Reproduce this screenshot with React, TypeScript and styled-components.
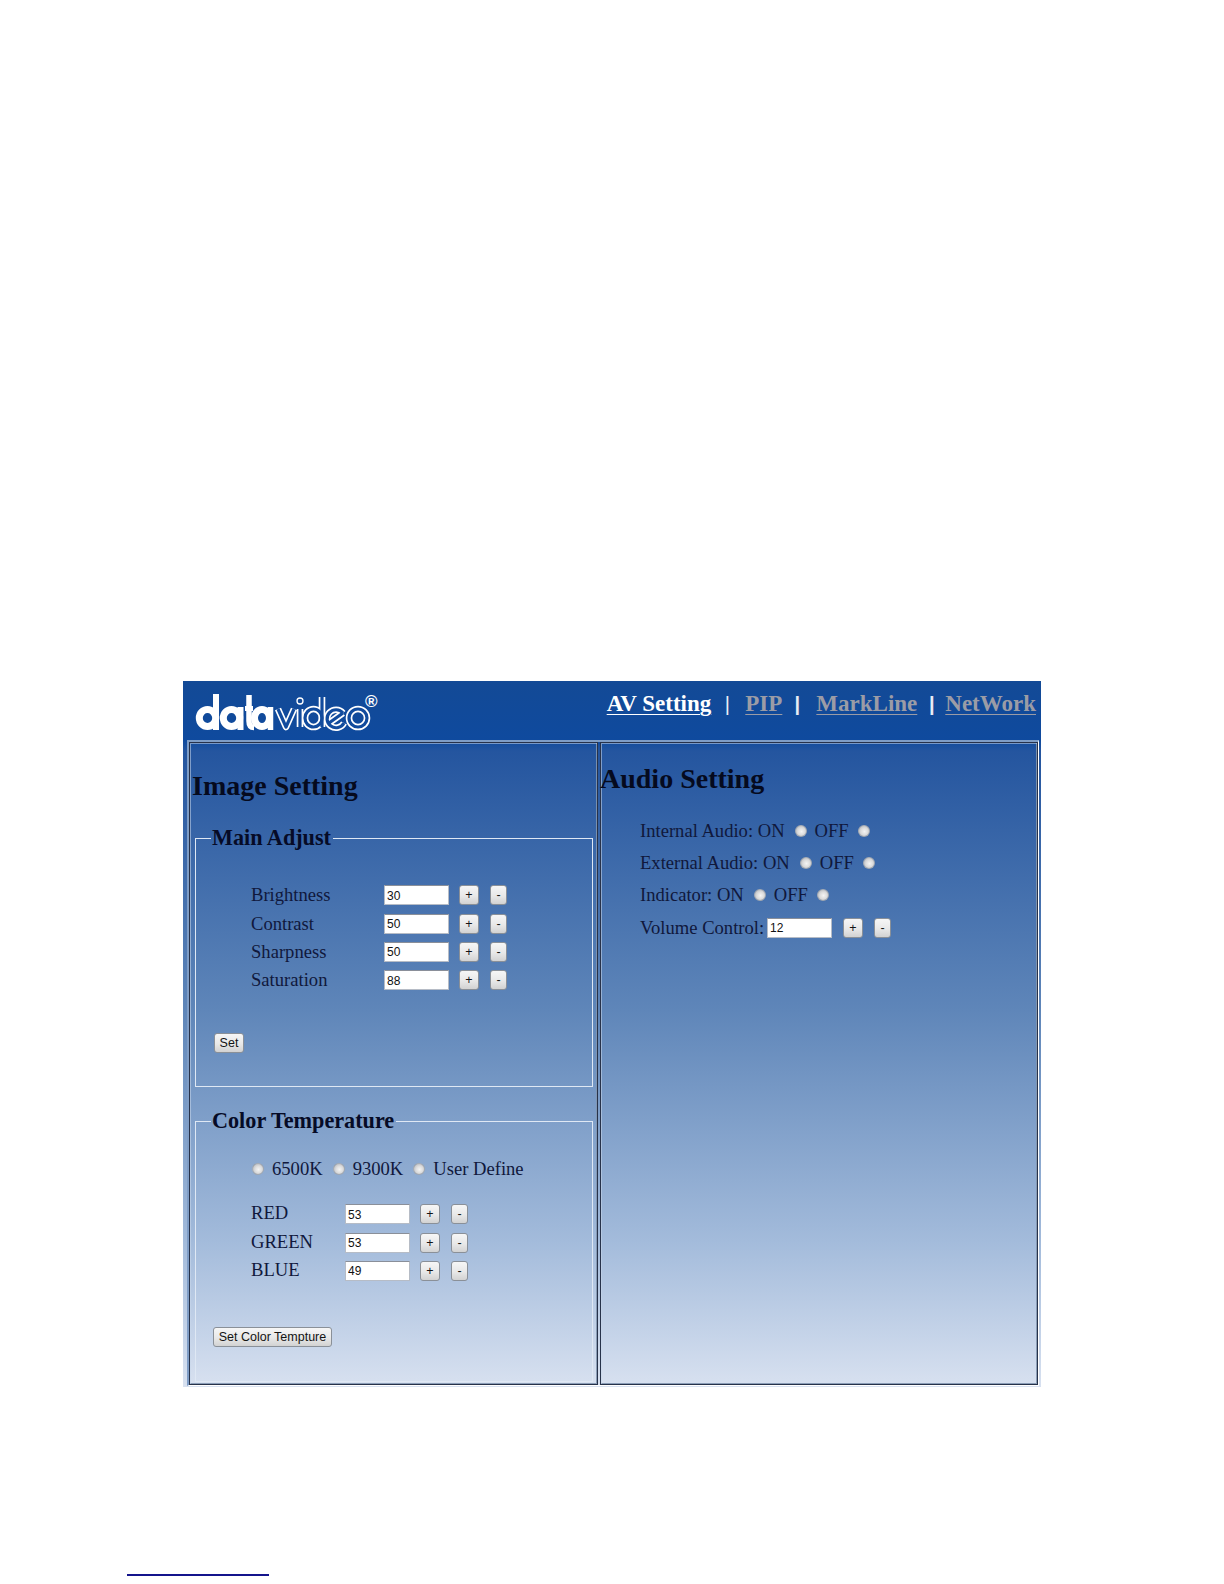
import React from "react";
import styled, { createGlobalStyle } from "styled-components";

const GlobalStyle = createGlobalStyle`
  html, body {
    margin: 0;
    padding: 0;
    background: #fff;
  }
  body {
    font-family: "Liberation Serif", "Times New Roman", serif;
  }
`;

const Page = styled.div`
  width: 1224px;
  height: 1584px;
  box-sizing: border-box;
  padding: 681px 0 0 183px;
  overflow: hidden;
`;

const Panel = styled.div`
  width: 858px;
  height: 706px;
  display: flex;
  flex-direction: column;
  background: linear-gradient(180deg, #124a9a 0, #0f4a9d 59px, #24559f 70px, #5f86b9 330px, #a3bbdb 560px, #d8e1f0 706px);
`;

const Header = styled.header`
  height: 59px;
  flex: none;
  display: flex;
  justify-content: space-between;
  background: linear-gradient(180deg, #134a96 0%, #0f4a9e 100%);
`;

const LogoBox = styled.div`
  padding: 9px 0 0 12px;
`;

const Nav = styled.nav`
  display: flex;
  align-items: baseline;
  padding: 10px 5px 0 0;
  font-size: 23px;
  font-weight: bold;
`;

const NavLink = styled.a<{ $active?: boolean }>`
  color: ${(p) => (p.$active ? "#fff" : "#9b9ca6")};
  text-decoration: underline;
  text-decoration-thickness: 1px;
  text-underline-offset: 3px;
`;

const NavSep = styled.span<{ $w: number; $thin?: boolean; $shift?: number }>`
  color: #e8edf6;
  width: ${(p) => p.$w}px;
  text-align: center;
  text-indent: ${(p) => p.$shift ?? 0}px;
  font-size: 20px;
  font-weight: ${(p) => (p.$thin ? "normal" : "bold")};
  font-family: "Liberation Sans", sans-serif;
`;

const Frame = styled.div`
  flex: 1;
  display: grid;
  grid-template-columns: 409px 1fr;
  margin: 0 2px 1px 4px;
  border-top: 2px solid #7f9dc6;
  border-left: 2px solid #7f9dc6;
  border-bottom: 1px solid #fff;
  border-right: 1px solid #fff;
  min-height: 0;
`;

const Cell = styled.section<{ $last?: boolean }>`
  border: 1px solid #27324a;
  box-shadow: inset 1px 1px 0 rgba(200, 215, 235, 0.55), inset -1px -1px 0 rgba(130, 150, 175, 0.9);
  padding: 1px;
  ${(p) => (p.$last ? "margin-left: 2px;" : "")}
  min-height: 0;
`;

const Title = styled.h2<{ $top: number; $left: number }>`
  margin: ${(p) => p.$top}px 0 0 ${(p) => p.$left}px;
  font-size: 28px;
  line-height: 32px;
  font-weight: bold;
  color: #050a1e;
`;

const Group = styled.fieldset<{ $top: number; $h: number }>`
  box-sizing: border-box;
  margin: ${(p) => p.$top}px 3px 0 4px;
  padding: 0;
  height: ${(p) => p.$h}px;
  border: 1.5px solid #dfe8f4;
  min-width: 0;
`;

const Legend = styled.legend`
  margin-left: 15px;
  padding: 0 2px 3px 1px;
  font-size: 22.2px;
  line-height: 25px;
  font-weight: bold;
  color: #060b26;
`;

const Rows = styled.div<{ $top: number; $left: number }>`
  padding: ${(p) => p.$top}px 0 0 ${(p) => p.$left}px;
`;

const Row = styled.div<{ $h: number }>`
  height: ${(p) => p.$h}px;
  display: flex;
  align-items: center;
`;

const Label = styled.span<{ $w?: number; $raised?: boolean }>`
  font-size: 18.6px;
  color: #10183c;
  white-space: pre;
  ${(p) => (p.$w ? `width: ${p.$w}px; flex: none;` : "")}
  ${(p) => (p.$raised ? "margin-top: -2px;" : "")}
`;

const ValueInput = styled.input`
  box-sizing: border-box;
  width: 65px;
  height: 20px;
  flex: none;
  margin: 0;
  padding: 1px 0 0 2px;
  border: 1px solid #b6bcc6;
  border-top-color: #8a8f99;
  background: #fff;
  color: #111;
  font-family: "Liberation Sans", Arial, sans-serif;
  font-size: 12px;
  outline: none;
`;

const Btn = styled.button<{ $ml?: number; $w?: number }>`
  box-sizing: border-box;
  margin: 0 0 0 ${(p) => p.$ml ?? 0}px;
  padding: 0;
  height: 20px;
  width: ${(p) => (p.$w ? `${p.$w}px` : "auto")};
  flex: none;
  border: 1px solid #8a9098;
  border-radius: 3px;
  background: linear-gradient(180deg, #f6f6f6 0%, #e8e8e8 55%, #d2d2d2 100%);
  color: #141414;
  font-family: "Liberation Sans", Arial, sans-serif;
  font-size: 12.5px;
  line-height: 16px;
`;

const Radio = styled.input.attrs({ type: "radio" })<{ $ml?: number; $mr?: number }>`
  appearance: none;
  box-sizing: border-box;
  width: 12px;
  height: 12px;
  flex: none;
  margin: 0 ${(p) => p.$mr ?? 0}px 0 ${(p) => p.$ml ?? 0}px;
  border: 1px solid rgba(130, 140, 155, 0.55);
  border-radius: 50%;
  background: radial-gradient(circle at 55% 55%, #f4f4f4 0, #dcdcdc 45%, #a9adb5 100%);
`;

const ActionBar = styled.div<{ $top: number; $left: number }>`
  padding: ${(p) => p.$top}px 0 0 ${(p) => p.$left}px;
`;

const AudioRows = styled.div`
  padding: 20px 0 0 38px;
`;

const FooterRule = styled.div`
  width: 142px;
  height: 2px;
  margin: 187px 0 0 -56px;
  background: #14148c;
`;

const Reg = styled.text`
  font-family: "Liberation Sans", Arial, sans-serif;
  font-size: 17px;
  font-weight: bold;
  fill: #fff;
`;

const Logo = () => {
  const video = (
    <>
      <path d="M83 19 L91 37 L99 19" />
      <path d="M105 19 V37" />
      <ellipse cx="118.5" cy="28" rx="8.5" ry="9" />
      <path d="M127 7 V37" />
      <path d="M148 23 L134 33 M148 23 A9 9 0 1 0 149 33" />
      <ellipse cx="163" cy="28" rx="9" ry="9" />
    </>
  );
  return (
    <svg width="190" height="46" viewBox="0 0 190 46">
      <g fill="none" stroke="#fff" strokeWidth="7">
        <ellipse cx="12.5" cy="28" rx="8.2" ry="8.5" />
        <path d="M21 4 V40" strokeWidth="6" />
        <ellipse cx="36.5" cy="28" rx="8.2" ry="8.5" />
        <path d="M45.5 17 V40" strokeWidth="6" />
        <path d="M54 5 V31 Q54 37.5 59 37.5" strokeWidth="5.5" />
        <path d="M50 18.5 H58" strokeWidth="5" />
        <ellipse cx="67" cy="28" rx="7.5" ry="8.5" />
        <path d="M75.5 17 V40" strokeWidth="5.5" />
      </g>
      <circle cx="105" cy="11" r="3" fill="none" stroke="#fff" strokeWidth="1.3" />
      <g fill="none" stroke="#fff" strokeWidth="6.6" strokeLinejoin="round">{video}</g>
      <g fill="none" stroke="#114b9d" strokeWidth="3.2" strokeLinejoin="round">{video}</g>
      <Reg x="170" y="17">®</Reg>
    </svg>
  );
};

const Stepper = ({ value, plus }: { value: string; plus: number }) => (
  <>
    <ValueInput defaultValue={value} />
    <Btn $ml={plus} $w={20}>+</Btn>
    <Btn $ml={11} $w={17}>-</Btn>
  </>
);

const AdjustRow = ({
  label,
  value,
  w,
  raised,
}: {
  label: string;
  value: string;
  w: number;
  raised?: boolean;
}) => (
  <Row $h={28.4}>
    <Label $w={w} $raised={raised}>{label}</Label>
    <Stepper value={value} plus={10} />
  </Row>
);

const App = () => {
  return (
    <Page>
      <GlobalStyle />
      <Panel>
        <Header>
          <LogoBox>
            <Logo />
          </LogoBox>
          <Nav>
            <NavLink $active>AV Setting</NavLink>
            <NavSep $w={34} $thin $shift={-2}>|</NavSep>
            <NavLink>PIP</NavLink>
            <NavSep $w={34} $shift={-4}>|</NavSep>
            <NavLink>MarkLine</NavLink>
            <NavSep $w={28} $shift={1}>|</NavSep>
            <NavLink>NetWork</NavLink>
          </Nav>
        </Header>
        <Frame>
          <Cell>
            <Title $top={26} $left={1}>Image Setting</Title>
            <Group $top={22.5} $h={262.5}>
              <Legend>Main Adjust</Legend>
              <Rows $top={28.5} $left={55}>
                <AdjustRow label="Brightness" value="30" w={133} />
                <AdjustRow label="Contrast" value="50" w={133} />
                <AdjustRow label="Sharpness" value="50" w={133} />
                <AdjustRow label="Saturation" value="88" w={133} />
              </Rows>
              <ActionBar $top={38} $left={18}>
                <Btn $w={30}>Set</Btn>
              </ActionBar>
            </Group>
            <Group $top={20.5} $h={274.5}>
              <Legend>Color Temperature</Legend>
              <Rows $top={19.5} $left={56}>
                <Row $h={28}>
                  <Radio name="temp" $mr={8} />
                  <Label>6500K</Label>
                  <Radio name="temp" $ml={10} $mr={8} />
                  <Label>9300K</Label>
                  <Radio name="temp" $ml={10} $mr={8} />
                  <Label>User Define</Label>
                </Row>
              </Rows>
              <Rows $top={17} $left={55}>
                <AdjustRow label="RED" value="53" w={94} raised />
                <AdjustRow label="GREEN" value="53" w={94} raised />
                <AdjustRow label="BLUE" value="49" w={94} raised />
              </Rows>
              <ActionBar $top={42} $left={17}>
                <Btn $w={119}>Set Color Tempture</Btn>
              </ActionBar>
            </Group>
          </Cell>
          <Cell $last>
            <Title $top={19} $left={-2}>Audio Setting</Title>
            <AudioRows>
              <Row $h={32}>
                <Label>Internal Audio: ON</Label>
                <Radio name="internal" $ml={10} $mr={8} />
                <Label>OFF</Label>
                <Radio name="internal" $ml={9} />
              </Row>
              <Row $h={32}>
                <Label>External Audio: ON</Label>
                <Radio name="external" $ml={10} $mr={8} />
                <Label>OFF</Label>
                <Radio name="external" $ml={9} />
              </Row>
              <Row $h={32}>
                <Label>Indicator: ON</Label>
                <Radio name="indicator" $ml={10} $mr={8} />
                <Label>OFF</Label>
                <Radio name="indicator" $ml={9} />
              </Row>
              <Row $h={33}>
                <Label $w={127}>Volume Control:</Label>
                <Stepper value="12" plus={11} />
              </Row>
            </AudioRows>
          </Cell>
        </Frame>
      </Panel>
      <FooterRule />
    </Page>
  );
};

export default App;
